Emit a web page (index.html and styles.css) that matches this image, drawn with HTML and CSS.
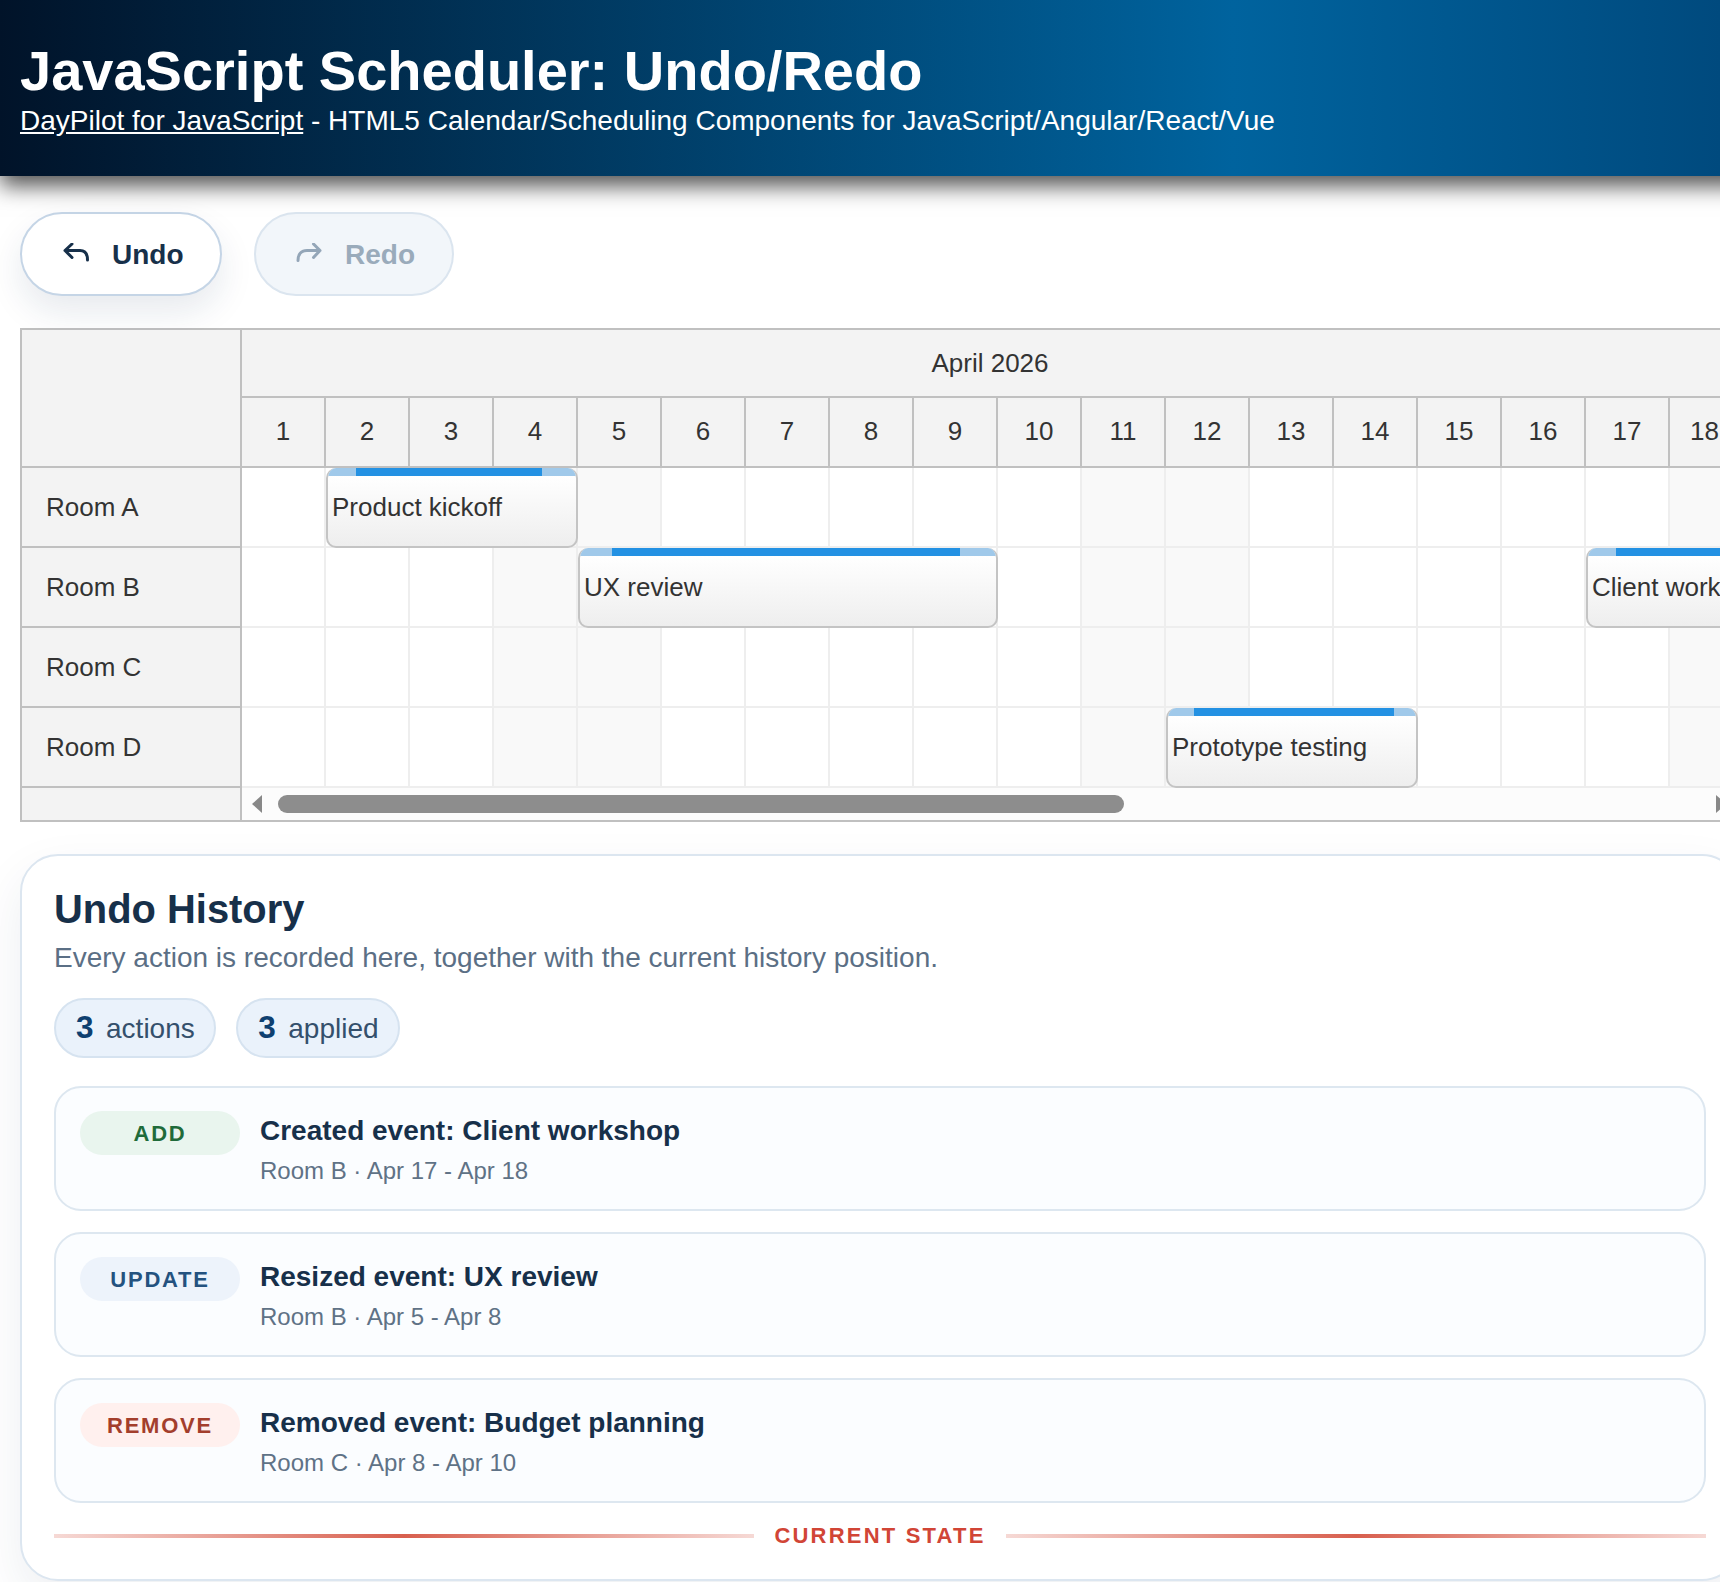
FILE: index.html
```html
<!DOCTYPE html>
<html lang="en">
<head>
<meta charset="utf-8">
<title>JavaScript Scheduler: Undo/Redo</title>
<link rel="stylesheet" href="styles.css">
</head>
<body>
<div class="page">
  <header class="hero">
    <h1>JavaScript Scheduler: Undo/Redo</h1>
    <p><a href="#">DayPilot for JavaScript</a> - HTML5 Calendar/Scheduling Components for JavaScript/Angular/React/Vue</p>
  </header>
  <main class="content">
    <div class="toolbar">
      <button class="btn btn-on" type="button">
        <svg class="btn-icon" viewBox="0 0 30 22" aria-hidden="true"><path d="M12 1 5 7.5 12 14.5M5 7.5H20C25 7.5 27.5 11 27.5 17"/></svg>
        <span>Undo</span>
      </button>
      <button class="btn btn-off" type="button">
        <svg class="btn-icon" viewBox="0 0 30 22" aria-hidden="true"><path d="M20.5 1 27 7.5 20.5 14.5M27 7.5H14C8.5 7.5 5 11 5 17.5"/></svg>
        <span>Redo</span>
      </button>
    </div>

    <section class="scheduler">
      <div class="sch-top">
        <div class="corner"></div>
        <div class="timeline">
          <div class="month">April 2026</div>
          <div class="days">
            <div class="day">1</div><div class="day">2</div><div class="day">3</div><div class="day">4</div><div class="day">5</div><div class="day">6</div><div class="day">7</div><div class="day">8</div><div class="day">9</div><div class="day">10</div><div class="day">11</div><div class="day">12</div><div class="day">13</div><div class="day">14</div><div class="day">15</div><div class="day">16</div><div class="day">17</div><div class="day day-last">18</div>
          </div>
        </div>
      </div>
      <div class="sch-row">
        <div class="res">Room A</div>
        <div class="cells">
          <i class="cell"></i><i class="cell"></i><i class="cell"></i><i class="cell we"></i><i class="cell we"></i><i class="cell"></i><i class="cell"></i><i class="cell"></i><i class="cell"></i><i class="cell"></i><i class="cell we"></i><i class="cell we"></i><i class="cell"></i><i class="cell"></i><i class="cell"></i><i class="cell"></i><i class="cell"></i><i class="cell we"></i>
          <div class="event ev-kickoff"><div class="bar"><b></b></div><span>Product kickoff</span></div>
        </div>
      </div>
      <div class="sch-row">
        <div class="res">Room B</div>
        <div class="cells">
          <i class="cell"></i><i class="cell"></i><i class="cell"></i><i class="cell we"></i><i class="cell we"></i><i class="cell"></i><i class="cell"></i><i class="cell"></i><i class="cell"></i><i class="cell"></i><i class="cell we"></i><i class="cell we"></i><i class="cell"></i><i class="cell"></i><i class="cell"></i><i class="cell"></i><i class="cell"></i><i class="cell we"></i>
          <div class="event ev-ux"><div class="bar"><b></b></div><span>UX review</span></div>
          <div class="event ev-client"><div class="bar"><b></b></div><span>Client workshop</span></div>
        </div>
      </div>
      <div class="sch-row">
        <div class="res">Room C</div>
        <div class="cells">
          <i class="cell"></i><i class="cell"></i><i class="cell"></i><i class="cell we"></i><i class="cell we"></i><i class="cell"></i><i class="cell"></i><i class="cell"></i><i class="cell"></i><i class="cell"></i><i class="cell we"></i><i class="cell we"></i><i class="cell"></i><i class="cell"></i><i class="cell"></i><i class="cell"></i><i class="cell"></i><i class="cell we"></i>
        </div>
      </div>
      <div class="sch-row">
        <div class="res">Room D</div>
        <div class="cells">
          <i class="cell"></i><i class="cell"></i><i class="cell"></i><i class="cell we"></i><i class="cell we"></i><i class="cell"></i><i class="cell"></i><i class="cell"></i><i class="cell"></i><i class="cell"></i><i class="cell we"></i><i class="cell we"></i><i class="cell"></i><i class="cell"></i><i class="cell"></i><i class="cell"></i><i class="cell"></i><i class="cell we"></i>
          <div class="event ev-proto"><div class="bar"><b></b></div><span>Prototype testing</span></div>
        </div>
      </div>
      <div class="sch-foot">
        <div class="foot-corner"></div>
        <div class="scroll">
          <svg class="arrow" viewBox="0 0 10 18" aria-hidden="true"><path d="M10 0V18L0 9Z"/></svg>
          <div class="thumb"></div>
          <svg class="arrow arrow-end" viewBox="0 0 10 18" aria-hidden="true"><path d="M0 0V18L10 9Z"/></svg>
        </div>
      </div>
    </section>

    <section class="history">
      <h2>Undo History</h2>
      <p class="lead">Every action is recorded here, together with the current history position.</p>
      <div class="chips">
        <div class="chip"><strong>3</strong><span>actions</span></div>
        <div class="chip"><strong>3</strong><span>applied</span></div>
      </div>
      <div class="items">
        <article class="item">
          <div class="badge badge-add">ADD</div>
          <div class="item-body">
            <div class="item-title">Created event: Client workshop</div>
            <div class="item-meta">Room B · Apr 17 - Apr 18</div>
          </div>
        </article>
        <article class="item">
          <div class="badge badge-update">UPDATE</div>
          <div class="item-body">
            <div class="item-title">Resized event: UX review</div>
            <div class="item-meta">Room B · Apr 5 - Apr 8</div>
          </div>
        </article>
        <article class="item">
          <div class="badge badge-remove">REMOVE</div>
          <div class="item-body">
            <div class="item-title">Removed event: Budget planning</div>
            <div class="item-meta">Room C · Apr 8 - Apr 10</div>
          </div>
        </article>
      </div>
      <div class="current">
        <i class="rule"></i>
        <span>CURRENT STATE</span>
        <i class="rule"></i>
      </div>
    </section>
  </main>
</div>
</body>
</html>
```
FILE: styles.css
```css
* { box-sizing: border-box; }
html, body { margin: 0; padding: 0; background: #fff; }
body { font-family: "Liberation Sans", Arial, sans-serif; color: #333; }
.page { width: 1720px; height: 1582px; overflow: hidden; position: relative; }

.hero {
  width: 1780px;
  height: 176px;
  padding: 39px 0 0 20px;
  color: #fff;
  background: linear-gradient(to right, #011329 0, #00639e 1233px, #004a7e 1720px);
  box-shadow: 0 10px 21px rgba(0, 0, 0, .68);
  position: relative;
}
.hero h1 { margin: 0 0 2px; font-size: 56px; line-height: 64px; font-weight: 700; }
.hero p { margin: 0; font-size: 28px; line-height: 32px; }
.hero a { color: #fff; text-decoration: underline; }

.content { padding: 36px 0 0 20px; width: 1740px; }

.toolbar { display: flex; gap: 32.5px; height: 84px; margin-bottom: 32px; }
.btn {
  display: flex;
  align-items: center;
  gap: 22px;
  height: 84px;
  padding: 0 36px 0 38px;
  border-radius: 42px;
  border: 2px solid #c5d5e6;
  background: #fff;
  font: 700 28px "Liberation Sans", Arial, sans-serif;
  color: #17304a;
}
.btn span { padding-top: 2px; }
.btn-on { box-shadow: 0 16px 34px rgba(20, 50, 90, .1); }
.btn-off { padding: 0 37px; background: #f2f6fa; border-color: #dbe5ef; color: #9aabbb; }
.btn-icon { width: 30px; height: 22px; fill: none; stroke: #17304a; stroke-width: 3; stroke-linecap: round; stroke-linejoin: round; }
.btn-off .btn-icon { stroke: #94a6b8; }

.scheduler {
  width: 1720px;
  height: 494px;
  border: 2px solid #c0c0c0;
  border-right: 0;
  overflow: hidden;
  font-size: 26px;
  color: #333;
}
.sch-top { display: flex; height: 138px; border-bottom: 2px solid #c0c0c0; }
.corner { width: 220px; flex: none; background: #f3f3f3; border-right: 2px solid #c0c0c0; }
.timeline { flex: 1; min-width: 0; background: #f3f3f3; }
.month { height: 68px; line-height: 66px; padding-right: 2px; text-align: center; border-bottom: 2px solid #c0c0c0; }
.days { display: flex; height: 68px; }
.day { flex: none; width: 84px; line-height: 66px; text-align: center; border-right: 2px solid #c0c0c0; }
.day-last { width: 69px; border-right: 0; }

.sch-row { display: flex; height: 80px; }
.res {
  width: 220px;
  flex: none;
  padding-left: 24px;
  line-height: 78px;
  background: #f3f3f3;
  border-right: 2px solid #c0c0c0;
  border-bottom: 2px solid #c0c0c0;
}
.cells { display: flex; flex: 1; min-width: 0; position: relative; }
.cell { display: block; flex: none; width: 84px; height: 80px; background: #fff; border-right: 2px solid #eee; border-bottom: 2px solid #eee; }
.cell.we { background: #f9f9f9; }

.event {
  position: absolute;
  top: 0;
  height: 80px;
  overflow: hidden;
  background: linear-gradient(to bottom, #fff 10%, #eee 100%);
  border: 2px solid #c4c4c4;
  border-top: 0;
  border-radius: 10px;
  padding-left: 4px;
  line-height: 78px;
  white-space: nowrap;
}
.bar { position: absolute; left: -2px; right: -2px; top: 0; height: 8px; background: #a0c9ea; }
.bar b { position: absolute; top: 0; bottom: 0; background: #2391e3; }
.ev-kickoff { left: 84px; width: 252px; }
.ev-kickoff b { left: 30px; right: 36px; }
.ev-ux { left: 336px; width: 420px; }
.ev-ux b { left: 34px; right: 38px; }
.ev-client { left: 1344px; width: 252px; }
.ev-client b { left: 30px; right: 30px; }
.ev-proto { left: 924px; width: 252px; }
.ev-proto b { left: 28px; right: 24px; }

.sch-foot { display: flex; height: 32px; }
.foot-corner { width: 220px; flex: none; background: #f3f3f3; border-right: 2px solid #c0c0c0; }
.scroll { flex: 1; min-width: 0; background: #fcfcfc; display: flex; align-items: center; padding-left: 10px; }
.arrow { width: 10px; height: 18px; fill: #888; flex: none; }
.thumb { width: 846px; height: 18px; margin-left: 16px; border-radius: 9px; background: #8d8d8d; flex: none; }
.arrow-end { margin-left: 592px; }

.history {
  width: 1720px;
  height: 727px;
  margin-top: 32px;
  padding: 30px 32px 0;
  background: #fff;
  border: 2px solid #dce6f0;
  border-radius: 38px;
  box-shadow: 0 20px 50px rgba(20, 50, 90, .08);
}
.history h2 { margin: 0 0 8px; font-size: 39.9px; line-height: 46px; font-weight: 700; color: #17304a; }
.lead { margin: 0 0 22px; font-size: 28px; line-height: 36px; color: #5b6f85; }
.chips { display: flex; gap: 20.5px; margin-bottom: 28px; }
.chip {
  display: flex;
  align-items: baseline;
  gap: 12.5px;
  height: 60px;
  padding: 0 19px 0 20px;
  line-height: 54px;
  border-radius: 30px;
  background: #eaf2fb;
  border: 2px solid #d6e3f0;
  font-size: 28px;
  color: #34506c;
}
.chip strong { font-size: 31.5px; color: #0e4070; }

.items { display: flex; flex-direction: column; gap: 21px; }
.item {
  display: flex;
  gap: 20px;
  height: 125px;
  padding: 23px 24px;
  background: #fbfdff;
  border: 2px solid #dde7f0;
  border-radius: 27px;
}
.badge {
  width: 160px;
  height: 44px;
  flex: none;
  border-radius: 22px;
  text-align: center;
  font-size: 22px;
  font-weight: 700;
  line-height: 46px;
  letter-spacing: 1.76px;
}
.badge-add { background: #e9f5ee; color: #1f6b3a; }
.badge-update { background: #edf3fb; color: #24527f; }
.badge-remove { background: #fff0ee; color: #a33e2c; }
.item-body { padding-top: 2px; }
.item-title { font-size: 28px; line-height: 36px; font-weight: 700; color: #17304a; margin-bottom: 7px; }
.item-meta { font-size: 24px; line-height: 30px; color: #5f7286; }

.current { display: flex; align-items: center; gap: 20px; margin-top: 19px; height: 28px; }
.rule { flex: 1; height: 4px; background: linear-gradient(to right, #f6d9d5, #d85f4e 50%, #f6d9d5); }
.current span { font-size: 22px; font-weight: 700; letter-spacing: 2.2px; color: #d14536; }
```
